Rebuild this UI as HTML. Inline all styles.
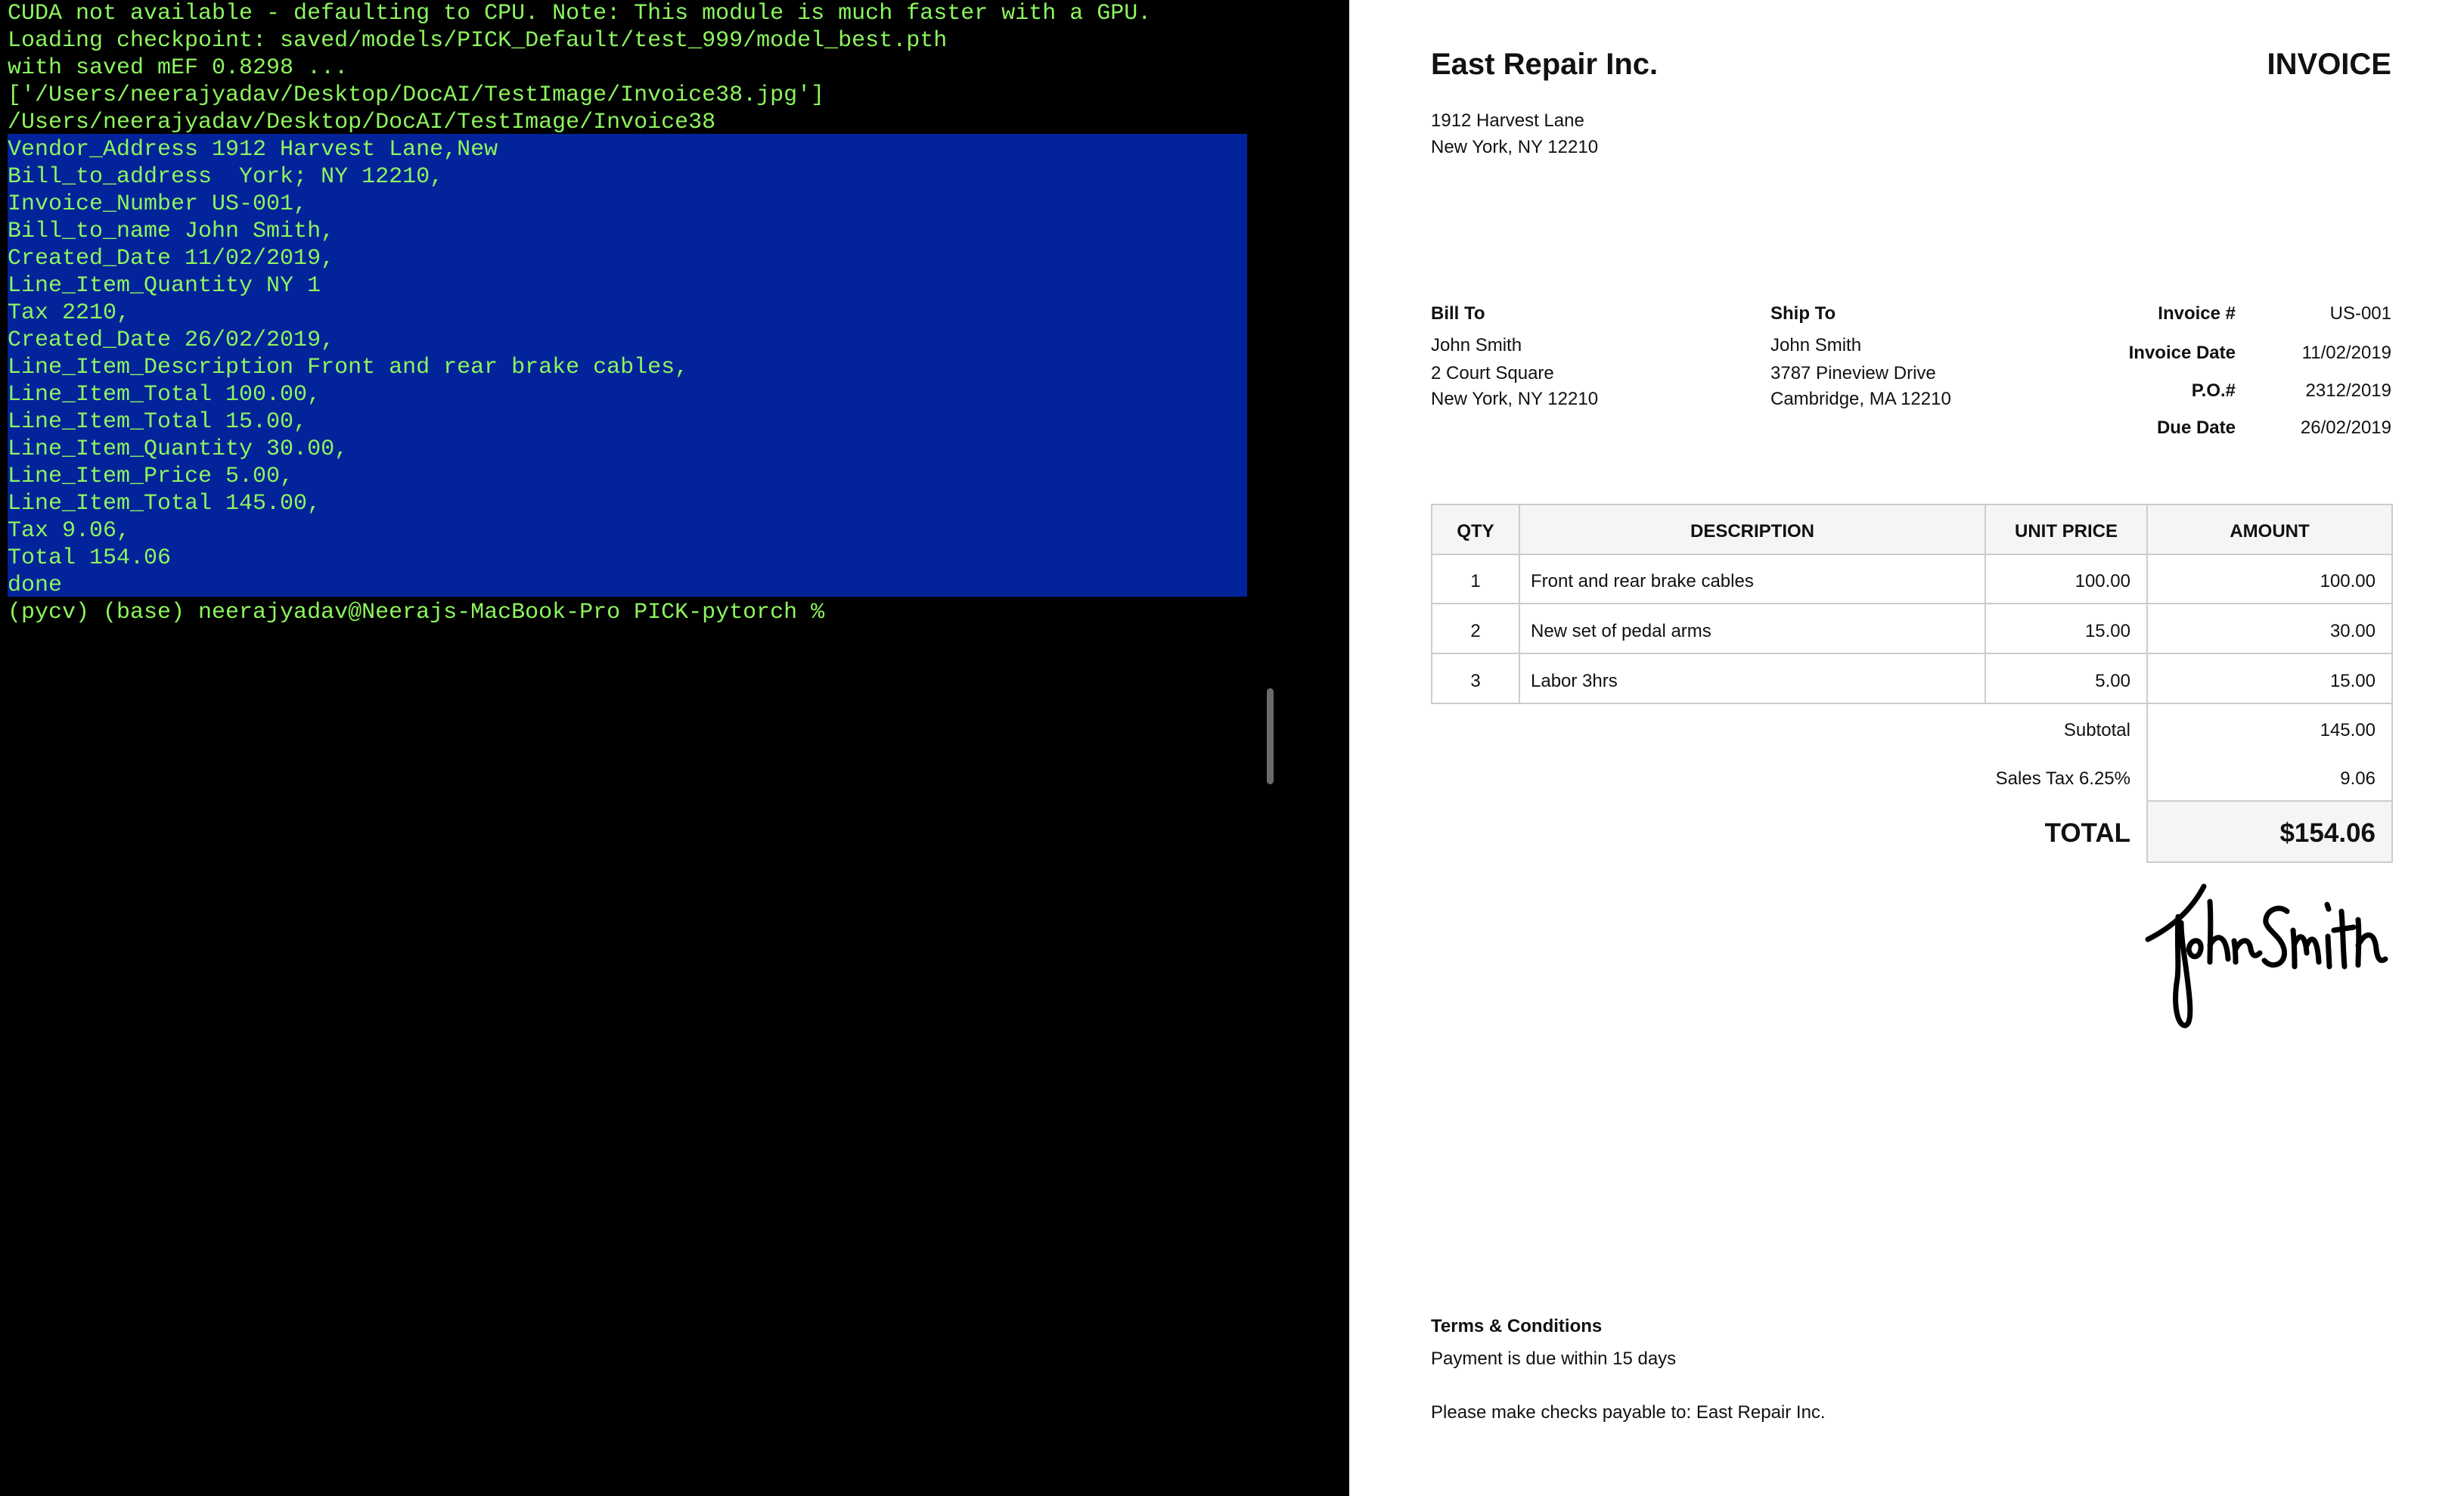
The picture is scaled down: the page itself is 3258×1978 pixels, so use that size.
<!DOCTYPE html>
<html><head><meta charset="utf-8"><style>
html,body{margin:0;padding:0}
body{width:3258px;height:1978px;position:relative;overflow:hidden;background:#000;font-family:"Liberation Sans",Arial,sans-serif}
#term{position:absolute;left:0;top:0;width:1784px;height:1978px;background:#000}
#sel{position:absolute;left:10px;top:177px;width:1639px;height:612px;background:#03239a}
#txt{position:absolute;left:10px;top:0px;font-family:"Liberation Mono",monospace;font-size:30px;line-height:36px;color:#8cf55f;white-space:pre;letter-spacing:0}
#scroll{position:absolute;left:1675px;top:910px;width:9px;height:127px;background:#6a6a6a;border-radius:5px}
#doc{position:absolute;left:1784px;top:0;width:1474px;height:1978px;background:#fff}
.t{position:absolute;white-space:nowrap;color:#111;font-size:24px;line-height:24px}
.b{font-weight:bold}
.r{text-align:right}
.cell{position:absolute;box-sizing:border-box;border:2px solid #ccc}
</style></head><body>
<div id="term">
<div id="sel"></div>
<div id="txt">CUDA not available - defaulting to CPU. Note: This module is much faster with a GPU.
Loading checkpoint: saved/models/PICK_Default/test_999/model_best.pth
with saved mEF 0.8298 ...
['/Users/neerajyadav/Desktop/DocAI/TestImage/Invoice38.jpg']
/Users/neerajyadav/Desktop/DocAI/TestImage/Invoice38
Vendor_Address 1912 Harvest Lane,New
Bill_to_address  York; NY 12210,
Invoice_Number US-001,
Bill_to_name John Smith,
Created_Date 11/02/2019,
Line_Item_Quantity NY 1
Tax 2210,
Created_Date 26/02/2019,
Line_Item_Description Front and rear brake cables,
Line_Item_Total 100.00,
Line_Item_Total 15.00,
Line_Item_Quantity 30.00,
Line_Item_Price 5.00,
Line_Item_Total 145.00,
Tax 9.06,
Total 154.06
done
(pycv) (base) neerajyadav@Neerajs-MacBook-Pro PICK-pytorch %</div>
<div id="scroll"></div>
</div>
<div id="doc"></div>

<div class="t b" style="left:1892px;top:65px;font-size:40px;line-height:40px">East Repair Inc.</div>
<div class="t b r" style="right:96px;top:65px;font-size:40px;line-height:40px">INVOICE</div>
<div class="t" style="left:1892px;top:148px">1912 Harvest Lane</div>
<div class="t" style="left:1892px;top:183px">New York, NY 12210</div>

<div class="t b" style="left:1892px;top:403px">Bill To</div>
<div class="t" style="left:1892px;top:445px">John Smith</div>
<div class="t" style="left:1892px;top:482px">2 Court Square</div>
<div class="t" style="left:1892px;top:516px">New York, NY 12210</div>

<div class="t b" style="left:2341px;top:403px">Ship To</div>
<div class="t" style="left:2341px;top:445px">John Smith</div>
<div class="t" style="left:2341px;top:482px">3787 Pineview Drive</div>
<div class="t" style="left:2341px;top:516px">Cambridge, MA 12210</div>

<div class="t b r" style="right:302px;top:403px">Invoice #</div>
<div class="t b r" style="right:302px;top:455px">Invoice Date</div>
<div class="t b r" style="right:302px;top:505px">P.O.#</div>
<div class="t b r" style="right:302px;top:554px">Due Date</div>
<div class="t r" style="right:96px;top:403px">US-001</div>
<div class="t r" style="right:96px;top:455px">11/02/2019</div>
<div class="t r" style="right:96px;top:505px">2312/2019</div>
<div class="t r" style="right:96px;top:554px">26/02/2019</div>

<!-- table header -->
<div class="cell" style="left:1892px;top:666px;width:118px;height:68px;background:#f5f5f5"></div>
<div class="cell" style="left:2008px;top:666px;width:618px;height:68px;background:#f5f5f5"></div>
<div class="cell" style="left:2624px;top:666px;width:216px;height:68px;background:#f5f5f5"></div>
<div class="cell" style="left:2838px;top:666px;width:326px;height:68px;background:#f5f5f5"></div>
<div class="t b" style="left:1892px;width:118px;text-align:center;top:691px">QTY</div>
<div class="t b" style="left:2008px;width:618px;text-align:center;top:691px">DESCRIPTION</div>
<div class="t b" style="left:2624px;width:216px;text-align:center;top:691px">UNIT PRICE</div>
<div class="t b" style="left:2838px;width:326px;text-align:center;top:691px">AMOUNT</div>

<!-- rows -->
<div class="cell" style="left:1892px;top:732px;width:118px;height:67px"></div>
<div class="cell" style="left:2008px;top:732px;width:618px;height:67px"></div>
<div class="cell" style="left:2624px;top:732px;width:216px;height:67px"></div>
<div class="cell" style="left:2838px;top:732px;width:326px;height:67px"></div>
<div class="cell" style="left:1892px;top:797px;width:118px;height:68px"></div>
<div class="cell" style="left:2008px;top:797px;width:618px;height:68px"></div>
<div class="cell" style="left:2624px;top:797px;width:216px;height:68px"></div>
<div class="cell" style="left:2838px;top:797px;width:326px;height:68px"></div>
<div class="cell" style="left:1892px;top:863px;width:118px;height:68px"></div>
<div class="cell" style="left:2008px;top:863px;width:618px;height:68px"></div>
<div class="cell" style="left:2624px;top:863px;width:216px;height:68px"></div>
<div class="cell" style="left:2838px;top:863px;width:326px;height:68px"></div>

<div class="t" style="left:1892px;width:118px;text-align:center;top:757px">1</div>
<div class="t" style="left:2024px;top:757px">Front and rear brake cables</div>
<div class="t r" style="right:441px;top:757px">100.00</div>
<div class="t r" style="right:117px;top:757px">100.00</div>
<div class="t" style="left:1892px;width:118px;text-align:center;top:823px">2</div>
<div class="t" style="left:2024px;top:823px">New set of pedal arms</div>
<div class="t r" style="right:441px;top:823px">15.00</div>
<div class="t r" style="right:117px;top:823px">30.00</div>
<div class="t" style="left:1892px;width:118px;text-align:center;top:889px">3</div>
<div class="t" style="left:2024px;top:889px">Labor 3hrs</div>
<div class="t r" style="right:441px;top:889px">5.00</div>
<div class="t r" style="right:117px;top:889px">15.00</div>

<!-- totals -->
<div class="cell" style="left:2838px;top:929px;width:326px;height:131px"></div>
<div class="cell" style="left:2838px;top:1058px;width:326px;height:83px;background:#f5f5f5"></div>
<div class="t r" style="right:441px;top:954px">Subtotal</div>
<div class="t r" style="right:117px;top:954px">145.00</div>
<div class="t r" style="right:441px;top:1018px">Sales Tax 6.25%</div>
<div class="t r" style="right:117px;top:1018px">9.06</div>
<div class="t b r" style="right:441px;top:1084px;font-size:35px;line-height:35px">TOTAL</div>
<div class="t b r" style="right:117px;top:1084px;font-size:35px;line-height:35px">$154.06</div>

<svg style="position:absolute;left:2834px;top:1160px" width="360" height="220" viewBox="0 0 360 220" fill="none" stroke="#000" stroke-width="7" stroke-linecap="round" stroke-linejoin="round">
<path d="M6 82 C30 70 60 50 80 12"/>
<path d="M46 52 C44 90 48 120 44 140 C40 170 45 195 55 196 C66 194 62 160 55 110 C52 90 50 75 50 60"/>
<path d="M60 95 C62 80 78 80 76 95 C74 108 62 108 60 95"/>
<path d="M88 32 C90 60 88 90 88 112 M88 90 C96 74 110 74 112 108"/>
<path d="M120 84 C122 96 122 104 122 112 M122 95 C130 80 140 80 142 95 C144 104 148 106 154 100"/>
<path d="M190 45 C178 35 160 45 162 60 C166 72 182 78 186 95 C190 115 170 122 160 110"/>
<path d="M198 70 C200 90 200 105 200 118 M200 88 C206 74 214 74 216 100 M216 90 C222 76 230 78 232 112"/>
<path d="M244 78 L246 118 M243 36 L245 42"/>
<path d="M262 45 C264 70 264 95 266 118 M252 70 L278 66"/>
<path d="M284 56 C286 80 284 100 284 116 M284 90 C294 70 306 72 308 95 C310 110 314 112 320 108"/>
</svg>

<div class="t b" style="left:1892px;top:1742px">Terms &amp; Conditions</div>
<div class="t" style="left:1892px;top:1785px">Payment is due within 15 days</div>
<div class="t" style="left:1892px;top:1856px">Please make checks payable to: East Repair Inc.</div>
</body></html>
